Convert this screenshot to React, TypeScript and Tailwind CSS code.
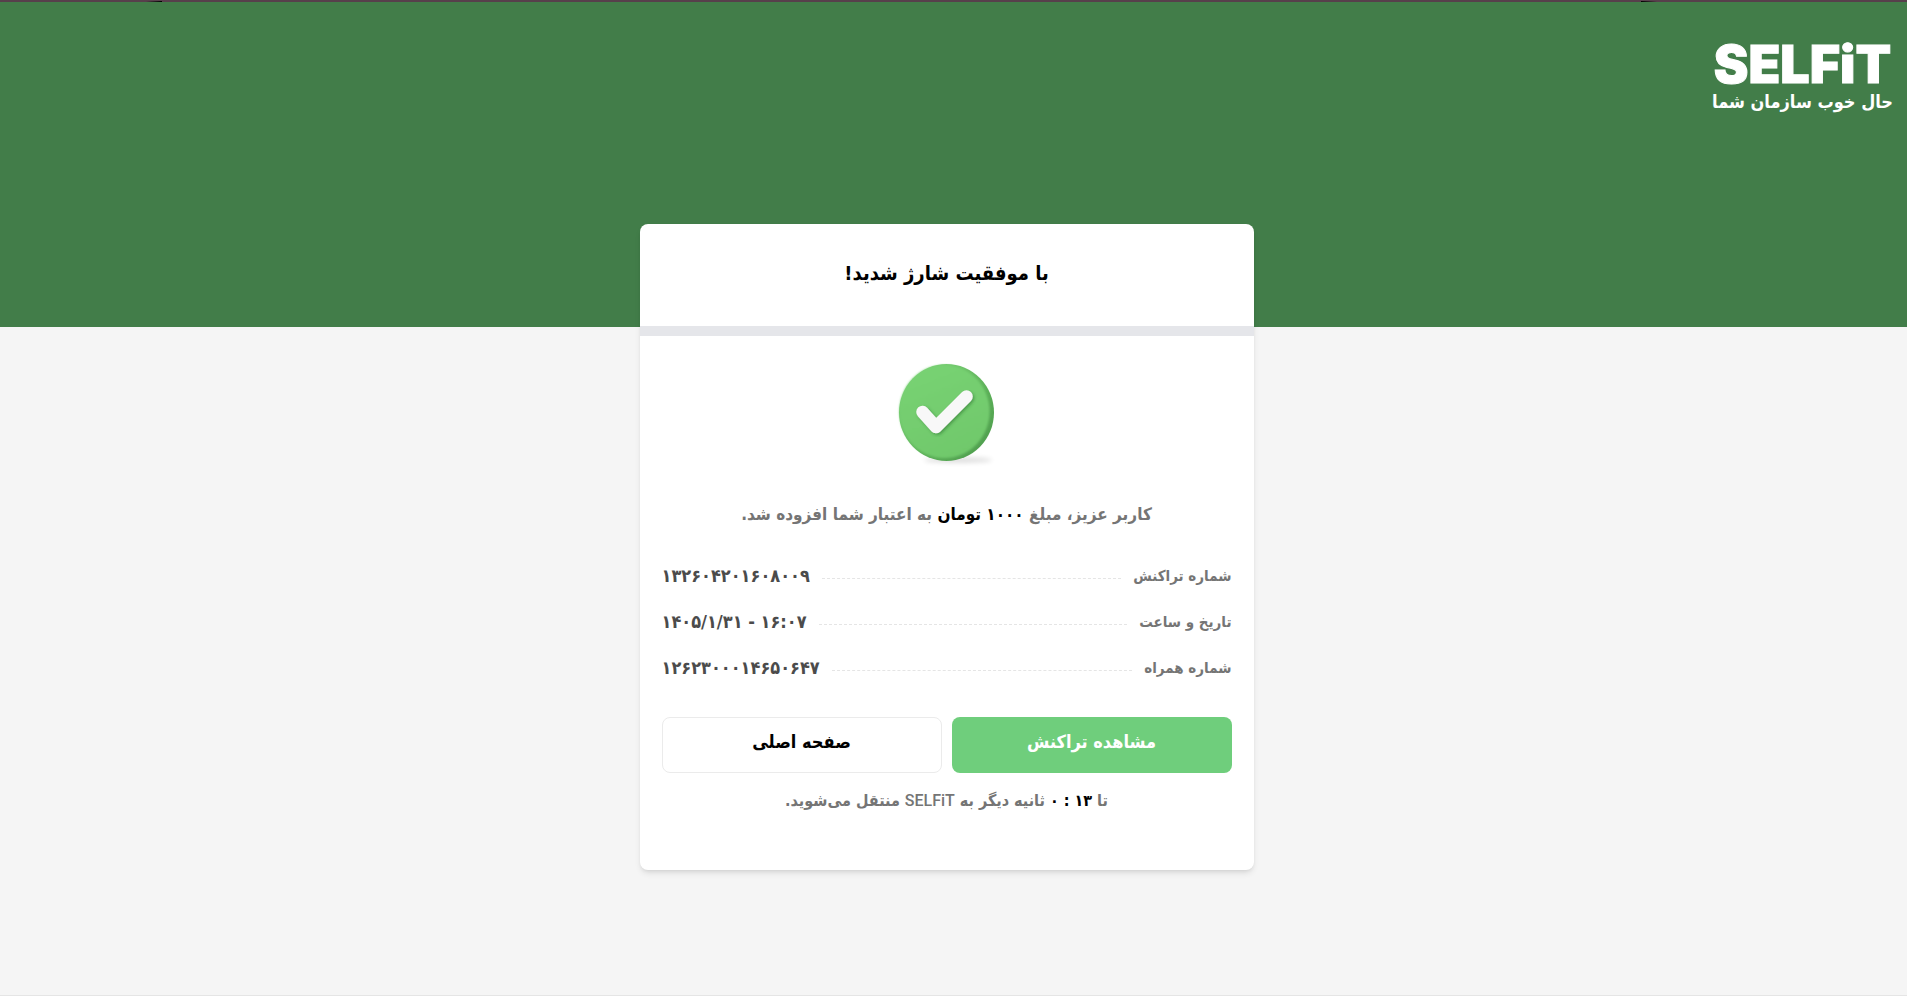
import React from 'react'

interface DetailRow {
  label: string
  value: string
}

const details: DetailRow[] = [
  { label: 'شماره تراکنش', value: '۱۳۲۶۰۴۲۰۱۶۰۸۰۰۹' },
  { label: 'تاریخ و ساعت', value: '۱۴۰۵/۱/۳۱ - ۱۶:۰۷' },
  { label: 'شماره همراه', value: '۱۲۶۲۳۰۰۰۱۴۶۵۰۶۴۷' },
]

function Logo() {
  return (
    <div className="flex flex-col items-center text-white">
      <span dir="ltr" className="text-[52px] leading-[48px] font-black font-[Inter,sans-serif] [-webkit-text-stroke:1px_white]">SELFiT</span>
      <span className="text-[18px] leading-[26px] font-bold">حال خوب سازمان شما</span>
    </div>
  )
}

function SuccessIcon() {
  return (
    <svg width="110" height="110" viewBox="0 0 110 110" aria-hidden="true">
      <defs>
        <linearGradient id="face" x1="0.3" y1="0" x2="0.7" y2="1">
          <stop offset="0" stopColor="#78d273" />
          <stop offset="1" stopColor="#70c86b" />
        </linearGradient>
        <linearGradient id="rim" x1="0" y1="0" x2="1" y2="1">
          <stop offset="0" stopColor="#83d97e" />
          <stop offset="0.6" stopColor="#5cb058" />
          <stop offset="1" stopColor="#4b984b" />
        </linearGradient>
        <filter id="edge" x="-10%" y="-10%" width="120%" height="120%">
          <feGaussianBlur stdDeviation="0.8" />
        </filter>
        <filter id="soft" x="-30%" y="-100%" width="160%" height="300%">
          <feGaussianBlur stdDeviation="2.5" />
        </filter>
        <filter id="tick" x="-20%" y="-20%" width="150%" height="150%">
          <feDropShadow dx="1.5" dy="1.5" stdDeviation="1.5" floodColor="#2f7a33" floodOpacity="0.6" />
        </filter>
      </defs>
      <ellipse cx="66" cy="98" rx="34" ry="2.5" fill="#000" opacity="0.15" filter="url(#soft)" />
      <ellipse cx="54.500" cy="50.500" rx="47.500" ry="48.500" fill="url(#rim)" />
      <ellipse cx="52.500" cy="49.500" rx="45" ry="46.500" fill="url(#face)" filter="url(#edge)" />
      <path
        d="M30.500 50 L44 65 L74.500 34.500"
        fill="none" stroke="#f8f8f8" strokeWidth="12.500"
        strokeLinecap="round" strokeLinejoin="round" filter="url(#tick)"
      />
    </svg>
  )
}

export default function App() {
  return (
    <div dir="rtl" className="min-h-screen bg-[#f5f5f5] border-b border-[#e5e5e5] font-['DejaVu_Sans_Condensed','DejaVu_Sans',sans-serif]">
      <div className="flex h-[2px] items-end justify-between bg-[#573f4b] pr-[250px] pl-[146px]">
        <span className="h-px w-4 bg-linear-to-r from-black to-transparent" />
        <span className="h-px w-4 bg-linear-to-l from-black to-transparent" />
      </div>
      <header className="flex h-[325px] items-start bg-[#427d49] px-[14px] pt-[39px]">
        <Logo />
      </header>

      <div className="-mt-[103px] pr-[14px]">
        <main className="mx-auto max-w-[614px] rounded-lg bg-white shadow-md">
          <h1 className="flex h-[102px] items-center justify-center pb-1 text-[20px] font-bold text-black">
            با موفقیت شارژ شدید!
          </h1>
          <div className="h-[10px] bg-[#e5e6ea]" />

          <div className="flex flex-col px-[22px] pt-[26px] pb-[57px]">
            <div className="flex justify-center">
              <SuccessIcon />
            </div>

            <p className="mt-[30px] text-center text-[17px] leading-[24px] font-bold text-[#757575]">
              کاربر عزیز، مبلغ <strong className="text-black">۱۰۰۰ تومان</strong> به اعتبار شما افزوده شد.
            </p>

            <dl className="mt-[29px] flex flex-col">
              {details.map((d) => (
                <div key={d.label} className="flex h-[46px] items-center gap-3">
                  <dt className="pb-1 text-[15px] font-bold text-[#757575]">{d.label}</dt>
                  <span className="flex-1 border-t border-dashed border-[#e5e5e5]" />
                  <dd dir="ltr" className="pb-1 text-[18px] leading-[24px] font-bold text-[#4b4b4b]">{d.value}</dd>
                </div>
              ))}
            </dl>

            <div className="mt-[24px] grid grid-cols-2 gap-[10px]">
              <button type="button" className="h-14 rounded-lg bg-[#6fce7c] pb-2 text-[18px] font-bold text-white">
                مشاهده تراکنش
              </button>
              <button type="button" className="h-14 rounded-lg border border-[#ebebeb] bg-white pb-2 text-[18px] font-bold text-black">
                صفحه اصلی
              </button>
            </div>

            <p className="mt-[16px] text-center text-[16px] leading-[24px] font-bold text-[#757575]">
              تا <strong dir="ltr" className="inline-block text-black">۰ : ۱۳</strong> ثانیه دیگر به{' '}
              <span className="font-medium font-[Roboto,sans-serif]">SELFiT</span> منتقل می‌شوید.
            </p>
          </div>
        </main>
      </div>
    </div>
  )
}
